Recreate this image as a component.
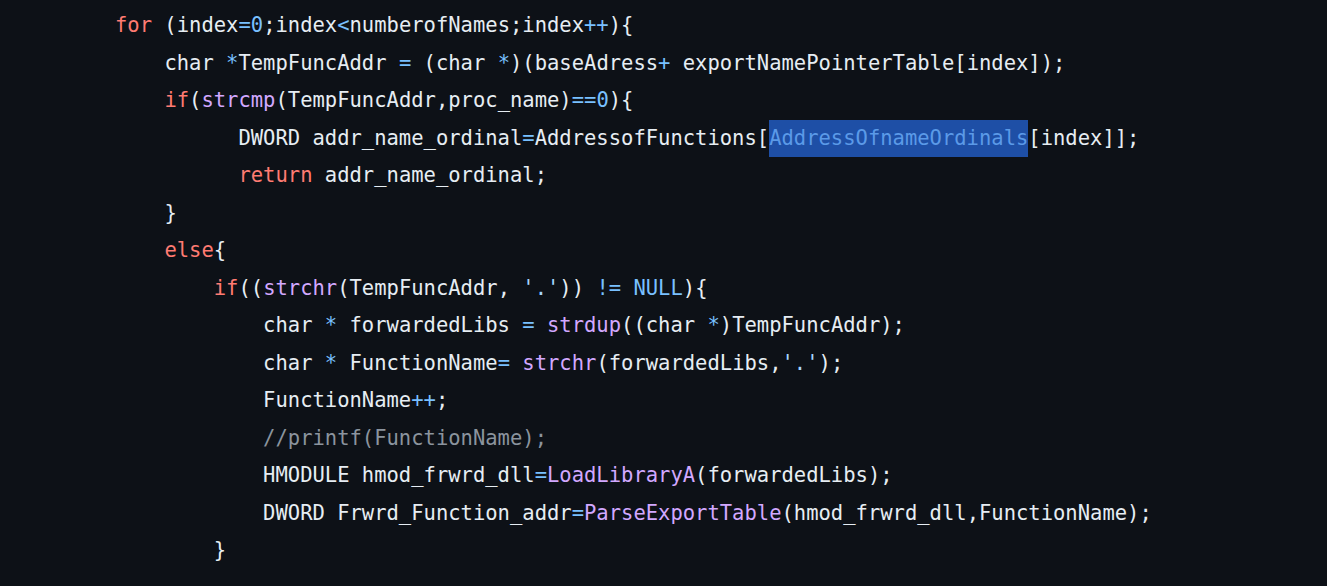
import React from "react";

const K = ({ c }: { c: string }) => <span className="text-[#ff7b72]">{c}</span>;
const F = ({ c }: { c: string }) => <span className="text-[#d2a8ff]">{c}</span>;
const O = ({ c }: { c: string }) => <span className="text-[#79c0ff]">{c}</span>;
const S = ({ c }: { c: string }) => <span className="text-[#a5d6ff]">{c}</span>;
const C = ({ c }: { c: string }) => <span className="text-[#8b949e]">{c}</span>;

const pad = (n: number) => " ".repeat(n);

const lines: React.ReactNode[] = [
  <>
    <K c="for" /> (index<O c="=" />
    <O c="0" />;index<O c="<" />numberofNames;index<O c="++" />){"{"}
  </>,
  <>
    {pad(4)}char <O c="*" />TempFuncAddr <O c="=" /> (char <O c="*" />)(baseAdress<O c="+" /> exportNamePointerTable[index]);
  </>,
  <>
    {pad(4)}
    <K c="if" />(<F c="strcmp" />(TempFuncAddr,proc_name)<O c="==" />
    <O c="0" />){"{"}
  </>,
  <>
    {pad(10)}DWORD addr_name_ordinal<O c="=" />AddressofFunctions[
    <span className="inline-block h-[37.5px] align-top bg-[#1e4fa6] text-[#5b9ae8]">AddressOfnameOrdinals</span>[index]];
  </>,
  <>
    {pad(10)}
    <K c="return" /> addr_name_ordinal;
  </>,
  <>{pad(4)}{"}"}</>,
  <>
    {pad(4)}
    <K c="else" />{"{"}
  </>,
  <>
    {pad(8)}
    <K c="if" />((<F c="strchr" />(TempFuncAddr, <S c="'.'" />)) <O c="!=" /> <O c="NULL" />){"{"}
  </>,
  <>
    {pad(12)}char <O c="*" /> forwardedLibs <O c="=" /> <F c="strdup" />((char <O c="*" />)TempFuncAddr);
  </>,
  <>
    {pad(12)}char <O c="*" /> FunctionName<O c="=" /> <F c="strchr" />(forwardedLibs,<S c="'.'" />);
  </>,
  <>
    {pad(12)}FunctionName<O c="++" />;
  </>,
  <>
    {pad(12)}
    <C c="//printf(FunctionName);" />
  </>,
  <>
    {pad(12)}HMODULE hmod_frwrd_dll<O c="=" />
    <F c="LoadLibraryA" />(forwardedLibs);
  </>,
  <>
    {pad(12)}DWORD Frwrd_Function_addr<O c="=" />
    <F c="ParseExportTable" />(hmod_frwrd_dll,FunctionName);
  </>,
  <>{pad(8)}{"}"}</>,
];

export default function App() {
  return (
    <div className="w-[1327px] h-[586px] overflow-hidden bg-[#0d1117]">
      <div
        className="pl-[115px] pt-[7px] text-[#e6edf3] text-[20.5px] leading-[37.5px] whitespace-pre"
        style={{ fontFamily: '"DejaVu Sans Mono", "Liberation Mono", monospace' }}
      >
        {lines.map((l, i) => (
          <div key={i} className="h-[37.5px]">
            {l}
          </div>
        ))}
      </div>
    </div>
  );
}
